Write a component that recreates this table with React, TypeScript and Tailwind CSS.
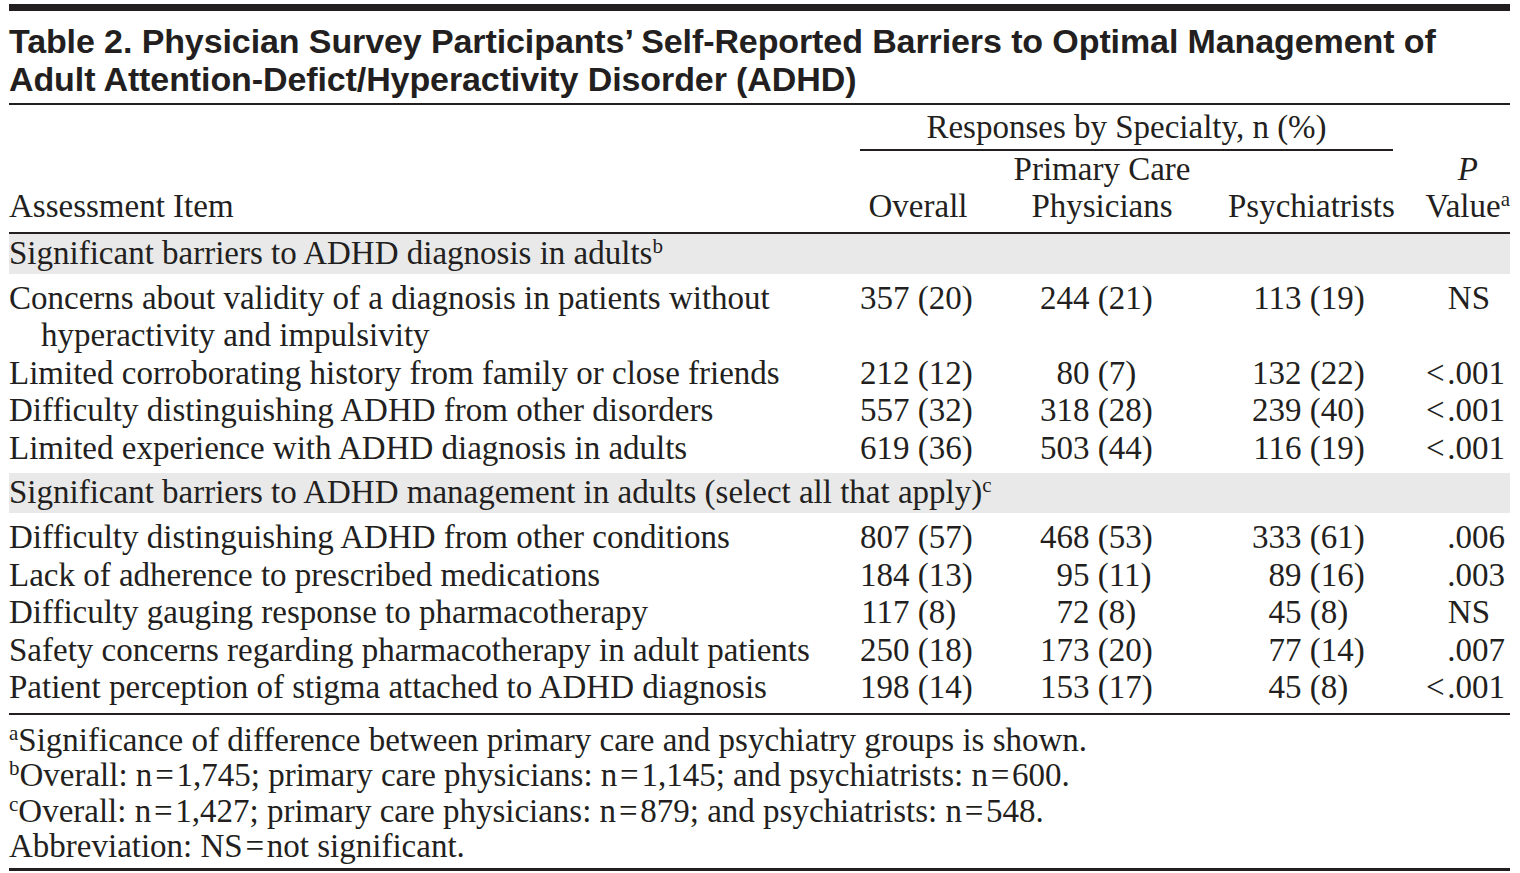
import React from 'react';

const serif = { fontFamily: '"Liberation Serif", "Times New Roman", serif' };

type Cell = [string, string];
type Row = { item: string; item2?: string; overall: Cell; pcp: Cell; psy: Cell; p: string };

const dx: Row[] = [
  { item: 'Concerns about validity of a diagnosis in patients without', item2: 'hyperactivity and impulsivity', overall: ['357', '20'], pcp: ['244', '21'], psy: ['113', '19'], p: 'NS' },
  { item: 'Limited corroborating history from family or close friends', overall: ['212', '12'], pcp: ['80', '7'], psy: ['132', '22'], p: '<\u200a.001' },
  { item: 'Difficulty distinguishing ADHD from other disorders', overall: ['557', '32'], pcp: ['318', '28'], psy: ['239', '40'], p: '<\u200a.001' },
  { item: 'Limited experience with ADHD diagnosis in adults', overall: ['619', '36'], pcp: ['503', '44'], psy: ['116', '19'], p: '<\u200a.001' },
];

const mgmt: Row[] = [
  { item: 'Difficulty distinguishing ADHD from other conditions', overall: ['807', '57'], pcp: ['468', '53'], psy: ['333', '61'], p: '.006' },
  { item: 'Lack of adherence to prescribed medications', overall: ['184', '13'], pcp: ['95', '11'], psy: ['89', '16'], p: '.003' },
  { item: 'Difficulty gauging response to pharmacotherapy', overall: ['117', '8'], pcp: ['72', '8'], psy: ['45', '8'], p: 'NS' },
  { item: 'Safety concerns regarding pharmacotherapy in adult patients', overall: ['250', '18'], pcp: ['173', '20'], psy: ['77', '14'], p: '.007' },
  { item: 'Patient perception of stigma attached to ADHD diagnosis', overall: ['198', '14'], pcp: ['153', '17'], psy: ['45', '8'], p: '<\u200a.001' },
];

const grid = 'grid grid-cols-[851px_116px_252px_165px_117px]';
const eq = '\u200a=\u200a';

function Sup({ children }: { children: React.ReactNode }) {
  return <span className="relative -top-[11px] text-[21px] leading-none">{children}</span>;
}

function Num({ v }: { v: Cell }) {
  return (
    <span className="whitespace-nowrap">
      <span className="inline-block w-[49.5px] text-right">{v[0]}</span> ({v[1]})
    </span>
  );
}

function DataRow({ r }: { r: Row }) {
  return (
    <div className={grid}>
      <div className="pl-[32px] -indent-[32px]">
        {r.item}
        {r.item2 && (<><br />{r.item2}</>)}
      </div>
      <div><Num v={r.overall} /></div>
      <div className="pl-[64px]"><Num v={r.pcp} /></div>
      <div className="pl-[24px]"><Num v={r.psy} /></div>
      <div className={r.p === 'NS' ? 'text-right pr-[20px]' : 'text-right pr-[5px]'}>{r.p}</div>
    </div>
  );
}

function Section({ title, sup, rows }: { title: string; sup: string; rows: Row[] }) {
  return (
    <>
      <div className="bg-[#e9e9e9] h-[40px] flex items-center">
        <span>{title}<Sup>{sup}</Sup></span>
      </div>
      <div className="py-[6px]">
        {rows.map((r, i) => <DataRow key={i} r={r} />)}
      </div>
    </>
  );
}

export default function App() {
  return (
    <div className="bg-white w-[1520px] h-[873px] overflow-hidden text-[#231f20]">
      <div className="ml-[9px] w-[1501px] pt-[4px]">
        <div className="h-[7px] bg-[#231f20]" />
        <h1
          className="mt-[11px] text-[34px] leading-[38px] font-bold tracking-[-0.1px]"
          style={{ fontFamily: '"Liberation Sans", Arial, sans-serif' }}
        >
          Table 2. Physician Survey Participants’ Self-Reported Barriers to Optimal Management of
          <br />
          Adult Attention-Defict/Hyperactivity Disorder (ADHD)
        </h1>
        <div className="mt-[5px] h-[2px] bg-[#231f20]" />

        <div className="text-[33px] leading-[37.5px]" style={serif}>
          {/* header */}
          <div className={`${grid} pt-[4px] pb-[6px]`}>
            <div className="row-start-1 col-start-2 col-span-3 text-center">Responses by Specialty, n (%)</div>
            <div className="row-start-2 col-start-2 col-span-3 mt-[2px] h-[2px] bg-[#231f20]" />
            <div className="row-start-3 col-start-1 row-span-2 self-end">Assessment Item</div>
            <div className="row-start-4 col-start-2 text-center">Overall</div>
            <div className="row-start-3 col-start-3 row-span-2 text-center">
              Primary Care
              <br />
              Physicians
            </div>
            <div className="row-start-4 col-start-4 text-center">Psychiatrists</div>
            <div className="row-start-3 col-start-5 text-right pr-[32px] italic">P</div>
            <div className="row-start-4 col-start-5 text-right whitespace-nowrap">
              Value<Sup>a</Sup>
            </div>
          </div>
          <div className="h-[2px] bg-[#231f20]" />

          <Section title="Significant barriers to ADHD diagnosis in adults" sup="b" rows={dx} />
          <Section title="Significant barriers to ADHD management in adults (select all that apply)" sup="c" rows={mgmt} />

          <div className="h-[2px] bg-[#231f20]" />
          <div className="pt-[8px] leading-[35.5px]">
            <div><Sup>a</Sup>Significance of difference between primary care and psychiatry groups is shown.</div>
            <div><Sup>b</Sup>Overall: n{eq}1,745; primary care physicians: n{eq}1,145; and psychiatrists: n{eq}600.</div>
            <div><Sup>c</Sup>Overall: n{eq}1,427; primary care physicians: n{eq}879; and psychiatrists: n{eq}548.</div>
            <div>Abbreviation: NS{eq}not significant.</div>
          </div>
          <div className="mt-[3px] h-[3px] bg-[#231f20]" />
        </div>
      </div>
    </div>
  );
}
